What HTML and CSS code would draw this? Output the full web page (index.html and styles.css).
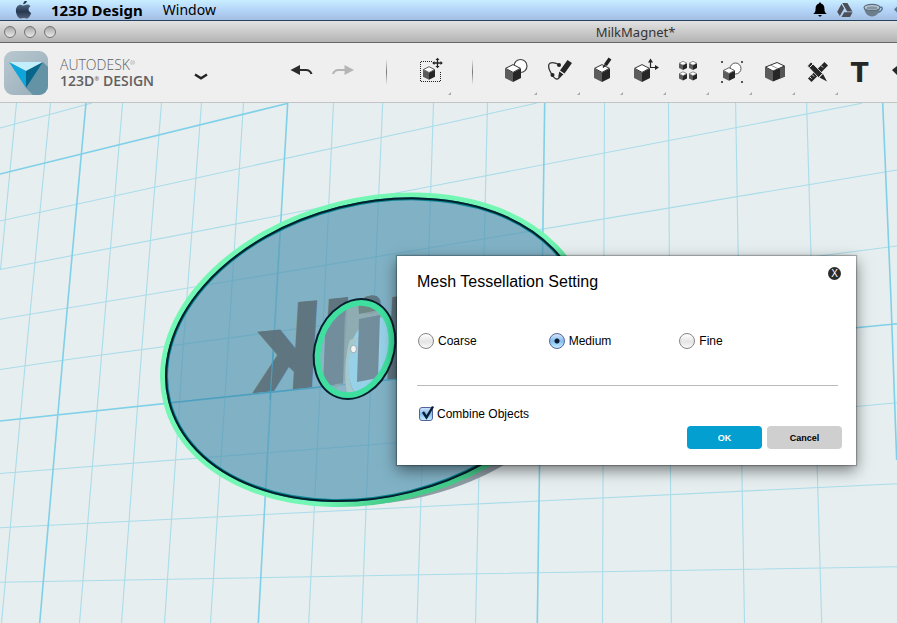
FILE: index.html
```html
<!DOCTYPE html>
<html lang="en">
<head>
    <meta charset="UTF-8">
    <meta name="viewport" content="width=device-width, initial-scale=1.0">
    <title>MilkMagnet - 123D Design</title>
    <link rel="stylesheet" href="styles.css">
</head>
<body>
    <!-- Shared shapes -->
    <svg class="defs" aria-hidden="true">
        <symbol id="cube" viewBox="0 0 16 18">
            <path d="M0 4.5V14l8 4V8.5z" fill="#5c5c5c"/>
            <path d="M16 4.5V14l-8 4V8.5z" fill="#262626"/>
            <path d="M8 .6l7.4 3.7L8 8.4.6 4.3z" fill="#fff" stroke="#333" stroke-width="1"/>
        </symbol>
    </svg>

    <header class="menubar">
        <nav class="menus">
            <svg class="apple" viewBox="15 0 17 18" aria-label="Apple">
                <defs>
                    <linearGradient id="appleFill" x1="0" y1="0" x2="0" y2="1">
                        <stop offset="0" stop-color="#526884"/>
                        <stop offset=".5" stop-color="#26384f"/>
                        <stop offset="1" stop-color="#536078"/>
                    </linearGradient>
                </defs>
                <path d="M23.5 4.6c1.4 0 2-1 3.6-1 1.500 0 2.600.6 3.400 1.700-2.800 1.700-2.400 5.400.7 6.700-.9 2.700-2.600 5.600-4.400 5.600-1.200 0-1.700-.7-3.100-.7s-1.900.7-3.100.7c-2.300 0-4.700-4.300-4.700-8 0-3.500 2.200-5.800 4.600-5.800 1.300 0 2.200.8 3 .8z" fill="url(#appleFill)"/>
                <path d="M23.200 3.300C23.200 1.200 24.800-.6 27-1c.2 2.200-1.600 4.200-3.800 4.300z" fill="#26384f"/>
            </svg>
            <a class="menu menu-app" href="#">123D Design</a>
            <a class="menu" href="#">Window</a>
        </nav>
        <div class="status">
            <svg width="14" height="16" viewBox="812 2 14 16"><path d="M819 2.500c.7 0 1 .4 1 1 2.600.6 3.400 2.800 3.400 5 0 3 .7 4.300 2.400 5.500H812.200c1.700-1.200 2.400-2.500 2.400-5.500 0-2.200.8-4.400 3.400-5 0-.6.300-1 1-1zM817.300 15h3.400c-.2 1.100-.9 1.600-1.700 1.600s-1.500-.5-1.700-1.600z"/></svg>
            <svg width="16" height="16" viewBox="837 2 16 16" fill="#4c4f57"><path d="M842.200 3h5.200l5 8.500h-5.200z"/><path d="M841.500 4l2.600 4.600-4.300 7.400-2.600-4.300z"/><path d="M844.200 12.300h8.400L850 17h-8.500z"/></svg>
            <svg width="21" height="16" viewBox="863 2 21 16"><path d="M879 7.500c4-1.500 5 2.500-1 5" fill="none" stroke="#5e7890" stroke-width="1.500"/><path d="M864 7.500c.4 5 3.600 9 8 9s7.600-4 8-9z" fill="#6c7d8c"/><ellipse cx="872" cy="7.500" rx="8" ry="3.200" fill="#b9c9d6" stroke="#5c6d7c" stroke-width="1.200"/><ellipse cx="872" cy="8" rx="5.500" ry="1.700" fill="#8596a3"/></svg>
            <svg width="3" height="16" viewBox="894 2 3 16"><path d="M897 6.500v6l-3-3z" fill="#5e7890"/></svg>
        </div>
    </header>

    <div class="titlebar">
        <div class="lights">
            <button class="light" aria-label="Close window"></button>
            <button class="light" aria-label="Minimize window"></button>
            <button class="light" aria-label="Zoom window"></button>
        </div>
        <h1 class="window-title">MilkMagnet*</h1>
    </div>

    <div class="toolbar">
        <div class="brand">
            <svg class="logo" viewBox="0 0 44 44" aria-hidden="true">
                <defs>
                    <linearGradient id="logoBg" x1="0" y1="0" x2="1" y2="1">
                        <stop offset="0" stop-color="#bac8d0"/>
                        <stop offset="1" stop-color="#96adb9"/>
                    </linearGradient>
                    <clipPath id="logoClip"><rect width="44" height="44" rx="9"/></clipPath>
                </defs>
                <g clip-path="url(#logoClip)">
                    <rect width="44" height="44" fill="url(#logoBg)"/>
                    <path d="M39 11l5 5v28H29l-7-7z" fill="#6493a5"/>
                    <path d="M5 11h34l-17 9z" fill="#c3effc"/>
                    <path d="M5 11l17 9v17z" fill="#10a5da"/>
                    <path d="M39 11l-17 9v17z" fill="#07678b"/>
                </g>
            </svg>
            <div class="brand-name">
                <span class="brand-top">AUTODESK<sup>®</sup></span>
                <span class="brand-product">123D<sup>®</sup> DESIGN</span>
            </div>
            <button class="chevron" aria-label="Application menu">
                <svg width="14" height="8" viewBox="0 0 14 8"><path d="M1 1.500l6 3.800 6-3.800" fill="none" stroke="#222" stroke-width="2.400"/></svg>
            </button>
        </div>

        <button class="tool" aria-label="Undo">
            <svg viewBox="280 43 43 59"><path d="M301 65v10l-9.500-5z" fill="#2b2b2b"/><path d="M300 70h7c3 0 4.500 1.200 5.500 4" fill="none" stroke="#2b2b2b" stroke-width="2.200"/></svg>
        </button>
        <button class="tool" aria-label="Redo">
            <svg viewBox="323 43 43 59"><path d="M345.500 65v10l9.500-5z" fill="#b5b5b5"/><path d="M346.500 70h-7c-3 0-4.500 1.200-5.500 4" fill="none" stroke="#b5b5b5" stroke-width="2.200"/></svg>
        </button>
        <span class="separator"></span>
        <button class="tool has-menu" aria-label="Transform">
            <svg viewBox="408 43 43 59">
                <path d="M432 61.500H420.500v20h20V71" fill="none" stroke="#222" stroke-dasharray="1 1"/>
                <use href="#cube" x="423" y="66" width="12" height="14"/>
                <path d="M437.500 59v8M433.500 63h8" stroke="#222" stroke-width="1.300"/>
                <path d="M437.500 57.700l2 2.300h-4zM437.500 68.300l2-2.300h-4zM432.200 63l2.300-2v4zM442.800 63l-2.300-2v4z" fill="#222"/>
            </svg>
        </button>
        <span class="separator"></span>
        <button class="tool has-menu" aria-label="Primitives">
            <svg viewBox="494 43 43 59"><circle cx="520.500" cy="66" r="6.500" fill="#fff" stroke="#444" stroke-width="1.200"/><use href="#cube" x="505" y="64" width="16" height="18"/></svg>
        </button>
        <button class="tool has-menu" aria-label="Sketch">
            <svg viewBox="537 43 43 59">
                <path d="M559 64.500c-9-4-12-1-9.500 5.500l2.500 5c2 3 4.500 5 6.500 3.500 1.500-1 2.500-2.500 3.500-4" fill="none" stroke="#333" stroke-width="1.300"/>
                <circle cx="559" cy="65" r="2" fill="#222"/><circle cx="552.500" cy="75" r="2" fill="#222"/>
                <path d="M567.500 60l4.500 3-7.500 10.500-4.500-3zM559.300 71.500l4.200 3-5.500 3.500z" fill="#262626"/>
            </svg>
        </button>
        <button class="tool has-menu" aria-label="Construct">
            <svg viewBox="580 43 43 59"><use href="#cube" x="594" y="64" width="16" height="18"/><path d="M603 67.500l3-3.500" stroke="#222" stroke-width="1.500"/><path d="M605.500 65l4.500-6.500" stroke="#222" stroke-width="3.500"/></svg>
        </button>
        <button class="tool has-menu" aria-label="Modify">
            <svg viewBox="623 43 43 59"><path d="M650.500 68v-7M650 67.500h6" fill="none" stroke="#222" stroke-width="1.200"/><path d="M650.500 58.500l2.500 4h-5zM659 67.500l-4-2.500v5z" fill="#222"/><use href="#cube" x="634" y="64" width="16" height="18"/></svg>
        </button>
        <button class="tool has-menu" aria-label="Pattern">
            <svg viewBox="666 43 43 59"><use href="#cube" x="679" y="61" width="8" height="9"/><use href="#cube" x="689" y="61" width="8" height="9"/><use href="#cube" x="679" y="71" width="8" height="10"/><use href="#cube" x="689" y="71" width="8" height="10"/></svg>
        </button>
        <button class="tool has-menu" aria-label="Grouping">
            <svg viewBox="709 43 43 59"><path d="M721 61h2v2h-2zM741 61h2v2h-2zM721 81h2v2h-2zM741 81h2v2h-2z" fill="#555"/><circle cx="735.500" cy="68.500" r="5.500" fill="#fff" stroke="#555"/><use href="#cube" x="723" y="67" width="12" height="14"/></svg>
        </button>
        <button class="tool has-menu" aria-label="Combine">
            <svg viewBox="752 43 43 59">
                <path d="M765 67v10.500l8 4V71z" fill="#5c5c5c"/><path d="M773 71l12-5v10.500l-12 5z" fill="#262626"/><path d="M780 68l5-2v10.500l-5 2z" fill="#555"/>
                <path d="M765.500 67l11.500-4.500 7.500 3.500-11.500 5z" fill="#fff" stroke="#333"/><path d="M770.500 65l7.500 3.700" stroke="#777" stroke-width=".8"/>
            </svg>
        </button>
        <button class="tool has-menu" aria-label="Measure">
            <svg viewBox="795 43 43 59">
                <path d="M824.500 62l3.500 3.500-16.500 16.500-3.500-3.500z" fill="#262626"/>
                <path d="M812 74.500l2 2M815 71.500l2 2M821 65.500l2 2M810 77l1.500 1.500" stroke="#eee"/>
                <path d="M811 62l11.500 11.500-4 4L807.500 66z" fill="#262626" stroke="#efefef" stroke-width=".8"/>
                <path d="M823 74l4 7.500-7.500-4z" fill="#262626"/><path d="M809.500 67.500l4-4" stroke="#efefef"/>
            </svg>
        </button>
        <button class="tool tool-text" aria-label="Text">T</button>
        <button class="tool" aria-label="Snap">
            <svg viewBox="881 43 43 59"><path d="M892 70l5-4 6 6-5 4z" fill="#262626"/></svg>
        </button>
    </div>

    <main class="workspace">
        <svg class="scene" viewBox="0 103 897 520" preserveAspectRatio="xMinYMin slice" role="img" aria-label="Oval magnet on the work plane">
            <defs>
                <clipPath id="hole"><ellipse cx="354.500" cy="349" rx="51.700" ry="39.700" transform="rotate(-70 354.500 349)"/></clipPath>
                <linearGradient id="band" x1="0" y1="0" x2="1" y2="1">
                    <stop offset="0" stop-color="#74f7b4"/>
                    <stop offset=".62" stop-color="#74f7b4"/>
                    <stop offset=".72" stop-color="#44cc8a"/>
                    <stop offset="1" stop-color="#44cc8a"/>
                </linearGradient>
            </defs>

            <!-- Work plane grid -->
            <path class="grid-minor" d="M16.500 103L.5 269.500M50.500 103L26.500 350 1.500 623M122.600 103L102 350 79.500 623M161.500 103L141.700 350 121.500 623M201.500 103L183 350 164.500 623M243.500 103L228 350 210.500 623M333.500 103L322 350 308.700 623M382.700 103L372 350 361.700 623M433.500 103L417 623M487.500 103L475.500 623M604.500 103L602.500 623M668.500 103L671.300 623M735.600 103L744.500 623M806.600 103L821.700 623"/>
            <path class="grid-minor" d="M0 128L92 103M0 221L450 122.500 537 103M0 269.500L447 183.300 862 103.300M0 319.300L447 245 897 170M0 369.500L71.700 359 393 316 827 255 897 246M0 473.500L397 442.700 856 406.500 897 402.700M0 527.700L450 505.300 897 483.700M0 582.300L450 574.300 897 566.700"/>
            <path class="grid-major" d="M86 103L63.500 350 39.700 623M287.700 103L273.300 350 258.300 623M544.700 103L537.300 623M882.700 103L891 300 896.700 460M0 174L288 103.300M0 421L397 379 856 327.700 897 323.700"/>

            <!-- Magnet body -->
            <path class="body-side" d="M338 501A212.300 146.600 -14.150 0 0 520 438.400L530 448C490 478 430 503 360 505z"/>
            <ellipse class="body-face" cx="375" cy="349.700" rx="212.300" ry="146.600" transform="rotate(-14.150 375 349.700)"/>
            <text class="engraving" transform="matrix(-1 .1 -.06 1 254 393)" text-anchor="end">Milk</text>
            <path class="grid-over" d="M273.300 350L270 400M167 403L397 379"/>
            <ellipse cx="375" cy="349.700" rx="215.300" ry="149.600" transform="rotate(-14.150 375 349.700)" fill="none" stroke="url(#band)" stroke-width="6"/>
            <ellipse class="edge-glow" cx="375" cy="349.700" rx="211.800" ry="146.100" transform="rotate(-14.150 375 349.700)"/>
            <ellipse class="edge" cx="375" cy="349.700" rx="212.300" ry="146.600" transform="rotate(-14.150 375 349.700)"/>

            <!-- Magnet hole -->
            <g clip-path="url(#hole)">
                <path d="M310 295h90v110h-90z" fill="#a2bccb" fill-opacity=".4"/>
                <path d="M347 304l20-2 22 22-30 12-13 44-12 10z" fill="#8faaac" fill-opacity=".75"/>
                <path d="M362 325C344 345 344 380 358 398L400 390V310z" fill="#96d1e8"/>
                <path d="M360 336C346 350 345 380 356 396L348 396C343 380 346 350 350 340z" fill="#a5c8cc"/>
                <path d="M326 308l19-2-2 77-20 3zM359 319l21-4-2 63-21 4z" fill="#728d9c"/>
                <path d="M358 300l22-8-1 18-20 4z" fill="#6f8885"/>
            </g>
            <ellipse class="hole-band" cx="354.500" cy="349" rx="47.500" ry="35.500" transform="rotate(-70 354.500 349)"/>
            <ellipse class="edge" cx="354.500" cy="349" rx="51.200" ry="39.200" transform="rotate(-70 354.500 349)"/>
            <ellipse cx="353.500" cy="349" rx="3" ry="3.800" fill="#f2f5f5" stroke="#a0a8a8" stroke-width="1"/>
        </svg>

        <form class="dialog" role="dialog" aria-labelledby="dialogTitle">
            <div class="dialog-header">
                <h2 id="dialogTitle">Mesh Tessellation Setting</h2>
                <button type="button" class="dialog-close" aria-label="Close">X</button>
            </div>
            <div class="quality">
                <label class="option"><input type="radio" name="quality" value="coarse">Coarse</label>
                <label class="option"><input type="radio" name="quality" value="medium" checked>Medium</label>
                <label class="option"><input type="radio" name="quality" value="fine">Fine</label>
            </div>
            <hr class="divider">
            <label class="option combine"><span class="check"><input type="checkbox" checked><svg viewBox="0 0 16 16" aria-hidden="true"><path d="M4 7l3.500 5.500L14 1.500" fill="none" stroke="#0c1c33" stroke-width="2.400"/></svg></span>Combine Objects</label>
            <div class="actions">
                <button type="button" class="btn btn-primary">OK</button>
                <button type="button" class="btn">Cancel</button>
            </div>
        </form>
    </main>
</body>
</html>
```
FILE: styles.css
```css
:root {
    --primary: #049fd1;
    --plane: #e6eeef;
    --toolbar: #efefef;
    --outline: #04202c;
}

* {
    box-sizing: border-box;
}

body {
    margin: 0;
    height: 100vh;
    display: flex;
    flex-direction: column;
    overflow: hidden;
    font-family: "Liberation Sans", Arial, sans-serif;
    color: #000;
}

button {
    padding: 0;
    border: none;
    background: none;
    font-family: inherit;
    cursor: pointer;
}

svg {
    display: block;
}

.defs {
    position: absolute;
    width: 0;
    height: 0;
}

/* Menu bar */
.menubar {
    flex: none;
    display: flex;
    justify-content: space-between;
    height: 21px;
    padding-left: 15px;
    background: linear-gradient(#c8eeff, #b5d5f8 50%, #a3bfe3);
    border-bottom: 1px solid #24425e;
    font-family: "Noto Sans", sans-serif;
}

.menus {
    display: flex;
    align-items: center;
}

.apple {
    width: 17px;
    height: 18px;
    margin-right: 19px;
}

.menu {
    margin-right: 20px;
    color: #000;
    font-size: 14px;
    line-height: 20px;
    text-decoration: none;
}

.menu-app {
    font-size: 15px;
    font-weight: bold;
}

.status {
    display: flex;
    align-items: center;
    gap: 10px;
}

/* Window title */
.titlebar {
    flex: none;
    position: relative;
    display: flex;
    align-items: center;
    height: 22px;
    background: linear-gradient(#e2e2e2, #b4b4b4);
    border-bottom: 1px solid #686868;
}

.lights {
    display: flex;
    gap: 8px;
    padding-left: 4px;
}

.light {
    width: 12px;
    height: 12px;
    border: 1px solid #757575;
    border-radius: 50%;
    background: linear-gradient(#a8a8a8, #e8e8e8);
}

.window-title {
    flex: 1;
    margin: 0;
    padding-left: 318px;
    text-align: center;
    font-family: "Noto Sans", sans-serif;
    font-size: 13px;
    font-weight: normal;
    line-height: 20px;
    color: #333;
}

/* Toolbar */
.toolbar {
    flex: none;
    display: flex;
    height: 60px;
    overflow: hidden;
    background: var(--toolbar);
    border-bottom: 1px solid #c2c4c4;
}

.brand {
    flex: none;
    display: flex;
    align-items: center;
    width: 279px;
    padding-left: 4px;
}

.logo {
    width: 44px;
    height: 44px;
}

.brand-name {
    display: flex;
    flex-direction: column;
    width: 146px;
    padding-left: 12px;
    font-family: "Open Sans", sans-serif;
    font-size: 14px;
    line-height: 16px;
    color: #606060;
}

.brand-name sup {
    font-size: 6px;
    line-height: 1px;
    vertical-align: 5px;
}

.brand-top {
    font-weight: 300;
}

.brand-product {
    font-weight: 600;
}

.chevron {
    padding-top: 8px;
}

.tool {
    flex: none;
    position: relative;
    width: 43px;
    height: 59px;
}

.tool svg {
    width: 43px;
    height: 59px;
}

.has-menu::after {
    content: "";
    position: absolute;
    right: 0;
    bottom: 7px;
    border-left: 3px solid transparent;
    border-bottom: 3px solid #aaa;
}

.tool-text {
    font-family: "DejaVu Sans", sans-serif;
    font-size: 26px;
    font-weight: bold;
    color: #262626;
}

.separator {
    flex: none;
    width: 1px;
    height: 26px;
    margin: 16px 21px;
    background: linear-gradient(#efefef, #777 50%, #efefef);
}

/* Work plane */
.workspace {
    flex: 1;
    position: relative;
    overflow: hidden;
    background: var(--plane);
}

.scene {
    width: 100%;
    height: 100%;
}

.grid-minor {
    fill: none;
    stroke: #aadcea;
    stroke-width: 1.1;
}

.grid-major {
    fill: none;
    stroke: #7fd0e8;
    stroke-width: 1.6;
}

.grid-over {
    fill: none;
    stroke: #4c9ebe;
    stroke-width: 1.2;
}

.body-side {
    fill: #8e9ca4;
}

.body-face {
    fill: #5497b3;
    fill-opacity: 0.7;
}

.engraving {
    fill: #5b6e78;
    fill-opacity: 0.9;
    font-family: Roboto, sans-serif;
    font-size: 116px;
    font-weight: 900;
}

.edge {
    fill: none;
    stroke: var(--outline);
    stroke-width: 2;
}

.edge-glow {
    fill: none;
    stroke: #078490;
    stroke-width: 3;
}

.hole-band {
    fill: none;
    stroke: #3fdf9f;
    stroke-width: 6;
}

/* Dialog */
.dialog {
    position: absolute;
    left: 397px;
    top: 153px;
    width: 459px;
    padding: 16px 14px 16px 20px;
    background: #fff;
    box-shadow: 0 0 1px 1px rgba(0, 0, 0, 0.25), 0 5px 14px rgba(0, 0, 0, 0.5);
}

.dialog-header {
    display: flex;
    justify-content: space-between;
    align-items: flex-start;
}

.dialog-header h2 {
    margin: 0;
    font-size: 16px;
    font-weight: normal;
    line-height: 20px;
}

.dialog-close {
    width: 13px;
    height: 13px;
    margin: -5px 1px 0 0;
    border-radius: 50%;
    background: #2b2b2b;
    color: #fff;
    font-size: 10px;
    line-height: 13px;
}

.quality {
    display: grid;
    grid-template-columns: repeat(3, 1fr);
    margin-top: 40px;
    padding: 0 32px 0 1px;
}

.option {
    display: flex;
    align-items: center;
    gap: 4px;
    height: 18px;
    font-size: 12px;
    line-height: 16px;
}

.option input {
    appearance: none;
    margin: 0;
    border: 1px solid #858585;
    background: linear-gradient(#fff, #e4e4e4 55%, #fafafa);
}

.option input[type="radio"] {
    width: 16px;
    height: 16px;
    border-radius: 50%;
}

.option input[type="radio"]:checked {
    border-color: #53639a;
    background: radial-gradient(circle, #0a1a30 2px, transparent 3px), linear-gradient(#d4e6f8, #83bdf0 50%, #c4eeff);
}

.option input[type="checkbox"] {
    width: 14px;
    height: 14px;
    border-color: #53639a;
    border-radius: 3px;
    background: linear-gradient(#cde2f8, #84bdef 50%, #c4eeff);
}

.divider {
    height: 1px;
    margin: 35px 4px 19px 0;
    border: none;
    background: #bababa;
}

.combine {
    padding-left: 2px;
}

.check {
    position: relative;
}

.check input {
    display: block;
}

.check svg {
    position: absolute;
    left: 0;
    bottom: 0;
    width: 16px;
    height: 16px;
    pointer-events: none;
}

.actions {
    display: flex;
    justify-content: flex-end;
    gap: 5px;
    margin-top: 3px;
}

.btn {
    width: 75px;
    height: 23px;
    border-radius: 4px;
    background: #cfcfcf;
    color: #000;
    font-size: 9px;
    font-weight: bold;
}

.btn-primary {
    background: var(--primary);
    color: #fff;
}
```
